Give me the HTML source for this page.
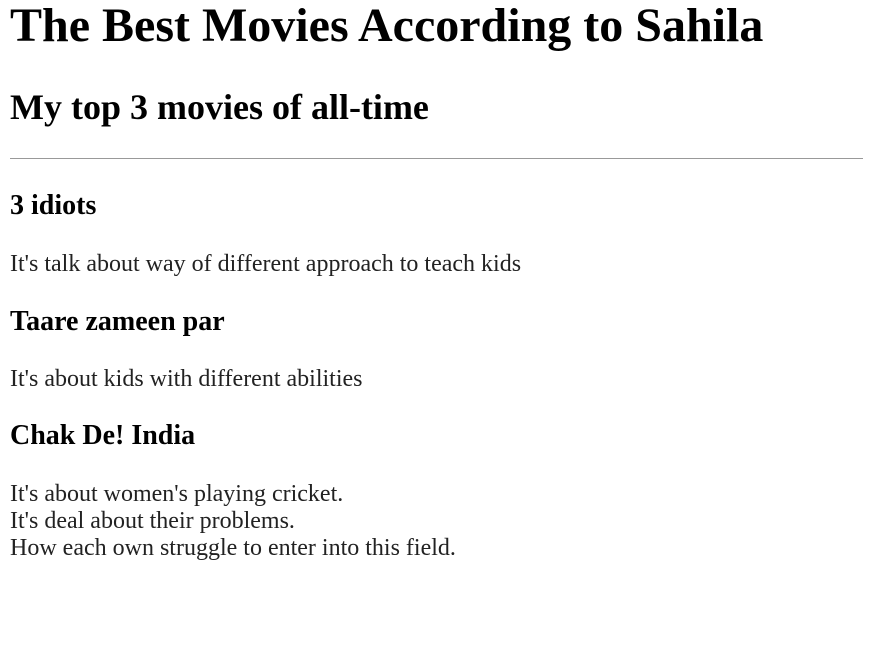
<!DOCTYPE html>
<html><head><meta charset="utf-8"><style>
body{margin:0 10px;font-family:"Liberation Serif",serif;font-size:24px;color:#222;}
h1{font-size:48px;margin:-2px 0 33px;color:#000}
h2{font-size:36px;margin:33px 0 30px;color:#000}
h3{font-size:28px;margin:28px 0 28.5px;color:#000}
p{margin:24px 0}
hr{margin:0 -3px 0 0;padding:0 0 3px;border:0;border-top:1px solid #999;}
.last{margin-top:-1px}
</style></head><body>
<h1>The Best Movies According to Sahila</h1>
<h2>My top 3 movies of all-time</h2>
<hr>
<h3>3 idiots</h3>
<p>It's talk about way of different approach to teach kids</p>
<h3>Taare zameen par</h3>
<p>It's about kids with different abilities</p>
<h3 style="margin-top:27px">Chak De! India</h3>
<p>It's about women's playing cricket.<br>It's deal about their problems.<br>How each own struggle to enter into this field.</p>
</body></html>
